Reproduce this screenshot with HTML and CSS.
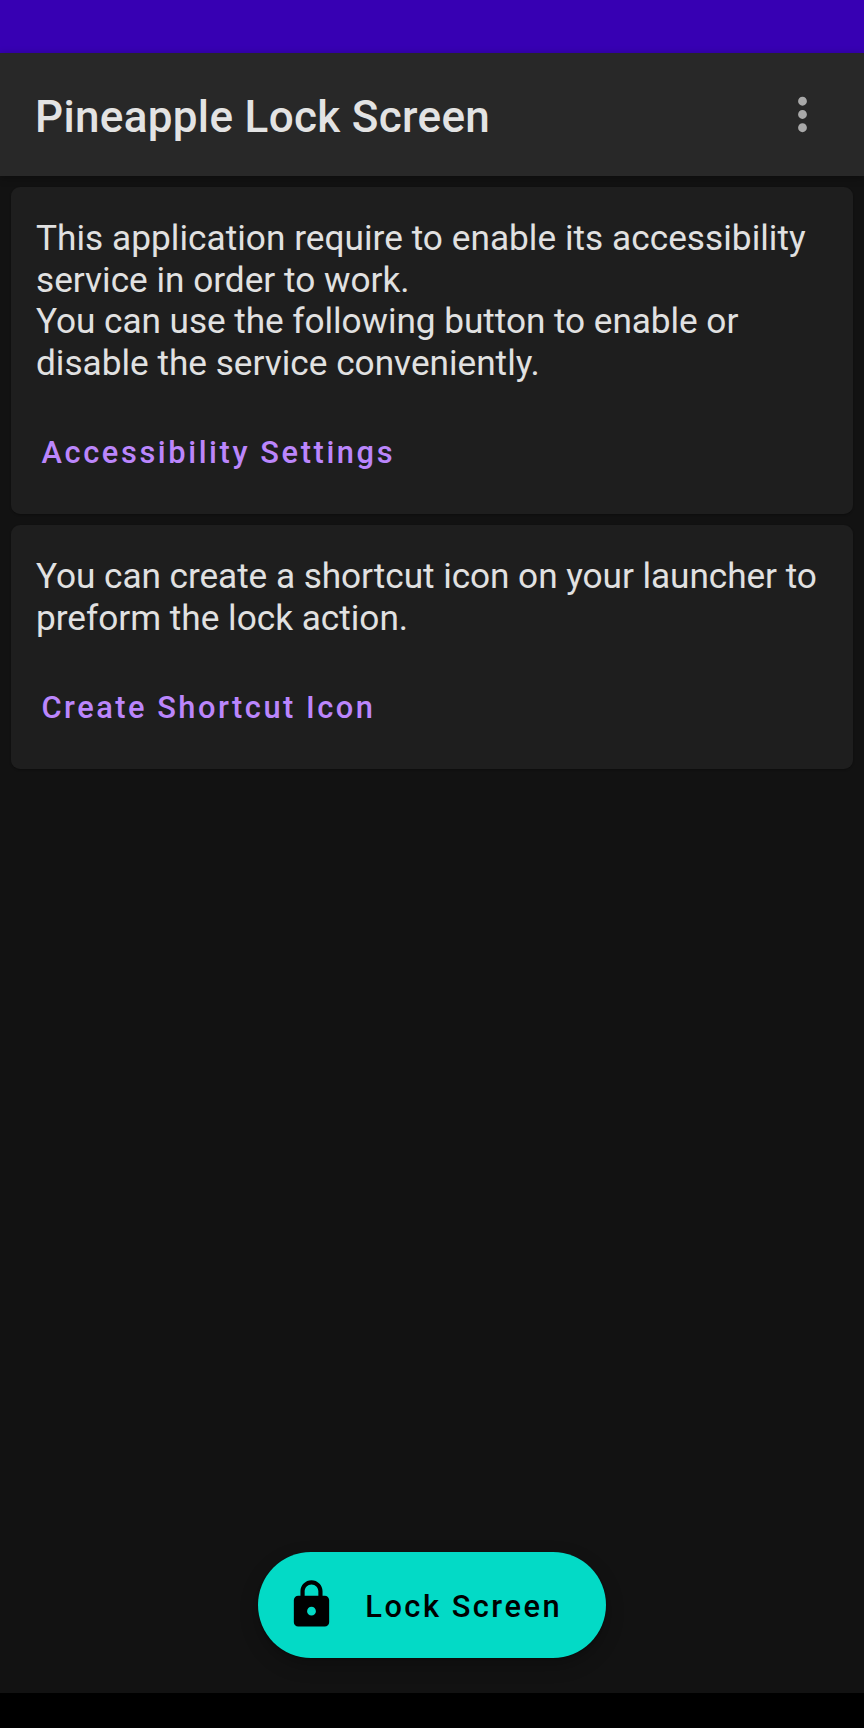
FILE: index.html
```
<!DOCTYPE html>
<html lang="en">
<head>
<meta charset="utf-8">
<title>Pineapple Lock Screen</title>
<link rel="stylesheet" href="styles.css">
</head>
<body>
<div class="screen">
  <div class="status-bar"></div>
  <header class="app-bar">
    <h1 class="title">Pineapple Lock Screen</h1>
    <button class="menu" aria-label="More options">
      <svg class="menu-icon" viewBox="0 0 24 24"><path d="M12 8c1.1 0 2-.9 2-2s-.9-2-2-2-2 .9-2 2 .9 2 2 2zm0 2c-1.1 0-2 .9-2 2s.9 2 2 2 2-.9 2-2-.9-2-2-2zm0 6c-1.1 0-2 .9-2 2s.9 2 2 2 2-.9 2-2-.9-2-2-2z"/></svg>
    </button>
  </header>
  <main class="content">
    <section class="card card-service">
      <p class="text"><span class="loose">This application require to enable its accessibility</span><br>service in order to work.<br><span class="tight">You can use the following button to enable or</span><br>disable the service conveniently.</p>
      <button class="text-button">Accessibility Settings</button>
    </section>
    <section class="card card-shortcut">
      <p class="text"><span class="tight">You can create a shortcut icon on your launcher to</span><br>preform the lock action.</p>
      <button class="text-button">Create Shortcut Icon</button>
    </section>
    <button class="fab">
      <svg class="lock-icon" viewBox="0 0 24 24"><path d="M18 8h-1V6c0-2.76-2.24-5-5-5S7 3.24 7 6v2H6c-1.1 0-2 .9-2 2v10c0 1.1.9 2 2 2h12c1.1 0 2-.9 2-2V10c0-1.1-.9-2-2-2zm-6 9c-1.1 0-2-.9-2-2s.9-2 2-2 2 .9 2 2-.9 2-2 2zm3.1-9H8.900V6c0-1.71 1.39-3.1 3.1-3.1s3.1 1.39 3.1 3.1v2z"/></svg>
      <span>Lock Screen</span>
    </button>
  </main>
  <div class="nav-bar"></div>
</div>
</body>
</html>
```
FILE: styles.css
```
* { box-sizing: border-box; }
body { margin: 0; background: #121212; font-family: Roboto, sans-serif; }
button { border: 0; padding: 0; margin: 0; background: none; font-family: inherit; }
.screen { display: flex; flex-direction: column; width: 864px; height: 1728px; }
.status-bar { height: 53px; background: #3700b3; }
.app-bar {
  display: flex; align-items: center; justify-content: space-between;
  height: 123px; padding: 0 35px; background: #282828;
  box-shadow: 0 2px 8px rgba(0, 0, 0, .3);
}
.title { margin: 5px 0 0; font-size: 44px; font-weight: 500; line-height: 52px; letter-spacing: .33px; color: #e3e3e3; white-space: nowrap; }
.menu { display: flex; height: 53px; }
.menu-icon { width: 53px; height: 53px; fill: #a9a9a9; }
.content { flex: 1; display: flex; flex-direction: column; gap: 11px; padding: 11px 11px 35px; }
.card {
  display: flex; flex-direction: column; align-items: flex-start;
  padding: 31px 25px 0; border-radius: 9px; background: #1e1e1e;
  box-shadow: 0 1px 2px rgba(0, 0, 0, .3);
}
.card-service { height: 327.3px; }
.card-shortcut { height: 244px; }
.text { margin: 0; font-size: 35.2px; line-height: 41.5px; color: #e1e1e1; white-space: nowrap; }
.loose { letter-spacing: .04px; }
.tight { letter-spacing: -.05px; }
.text-button { margin: 51px 0 0 5.500px; font-size: 30.8px; font-weight: 500; line-height: 36px; letter-spacing: 2.6px; color: #bb86fc; }
.card-shortcut .text-button { letter-spacing: 2.5px; }
.fab {
  display: flex; align-items: center; gap: 27px; align-self: center;
  width: 347.5px; height: 105.6px; margin-top: auto; padding-left: 27px; border-radius: 53px;
  background: #03dac6; color: #000; font-size: 30.8px; font-weight: 500; letter-spacing: 2.5px;
  box-shadow: 0 7px 18px rgba(0, 0, 0, .25), 0 1px 2px rgba(0, 0, 0, .3);
}
.fab span { margin-top: 2px; }
.lock-icon { width: 53px; height: 53px; margin-bottom: 1px; }
.nav-bar { height: 35px; background: #000; }
```
